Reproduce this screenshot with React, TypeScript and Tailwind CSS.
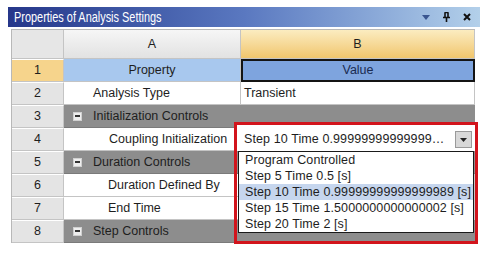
import React from 'react';

const rows = [
  { n: '2', label: 'Analysis Type', value: 'Transient', indent: 'pl-[29px]' },
  { n: '3', section: 'Initialization Controls' },
  { n: '4', label: 'Coupling Initialization', value: '', indent: 'pl-[45px]' },
  { n: '5', section: 'Duration Controls' },
  { n: '6', label: 'Duration Defined By', value: '', indent: 'pl-[44px]' },
  { n: '7', label: 'End Time', value: '', indent: 'pl-[44px]' },
  { n: '8', section: 'Step Controls' },
];

const options = [
  'Program Controlled',
  'Step 5 Time 0.5 [s]',
  'Step 10 Time 0.99999999999999989 [s]',
  'Step 15 Time 1.5000000000000002 [s]',
  'Step 20 Time 2 [s]',
];

const NumCell = ({ children, yellow }: { children: React.ReactNode; yellow?: boolean }) => (
  <div
    className={`flex items-center justify-center border-r border-b border-[#c4c4c4] border-t border-t-white ${
      yellow ? 'bg-[#f6d48c]' : 'bg-[#e4e4e4]'
    }`}
  >
    {children}
  </div>
);

const MinusBox = () => (
  <div className="w-[9px] h-[9px] bg-[#eeeeee] border border-[#d0d0d0] flex items-center justify-center">
    <div className="w-[5px] h-[1.5px] bg-[#333]" />
  </div>
);

export default function App() {
  return (
    <div className="w-[494px] h-[253px] bg-white pt-[7px] pl-[8px] text-[#1e1e1e] font-['Liberation_Sans',Arial,sans-serif] overflow-hidden">
      {/* title bar */}
      <div className="w-[472px] h-[20px] flex items-center pl-[6px] pr-[9px] bg-gradient-to-r from-[#26378a] via-[#5a78c0] to-[#b3d0ea]">
        <span className="inline-block w-[200px] whitespace-nowrap origin-left scale-x-[0.78] text-white text-[14px]">
          Properties of Analysis Settings
        </span>
        <div className="ml-auto flex items-center gap-[13px]">
          <svg width="8" height="5" viewBox="0 0 8 5">
            <path d="M0 0 L8 0 L4 5 Z" fill="#3a5590" />
          </svg>
          <svg width="7" height="10" viewBox="0 0 7 10">
            <path d="M1.5 0.5 H5.5 M2 0.5 V5.5 M5 0.5 V5.5 M0 5.5 H7 M3.5 5.5 V10" stroke="#111" strokeWidth="1.6" fill="none" />
          </svg>
          <svg width="8" height="8" viewBox="0 0 8 8">
            <path d="M1 1 L7 7 M7 1 L1 7" stroke="#111" strokeWidth="2" />
          </svg>
        </div>
      </div>

      {/* grid */}
      <div className="relative ml-[3px] mt-[2px] w-[464px] border-l border-t border-[#b8b8b8] text-[12.5px]">
        <div className="grid grid-cols-[52px_177px_234px] grid-rows-[29px_repeat(8,23px)]">
          <div className="bg-[#e6e6e6] border-r border-b border-[#c4c4c4]" />
          <div className="flex items-center justify-center bg-gradient-to-b from-[#f6f6f6] to-[#e2e2e2] border-r border-b border-[#c4c4c4]">
            A
          </div>
          <div className="flex items-center justify-center bg-gradient-to-b from-[#fbecc0] to-[#f1c66c] border-r border-b border-[#c4c4c4]">
            B
          </div>

          <NumCell yellow>1</NumCell>
          <div className="flex items-center justify-center bg-[#a8c8ee] border-r border-b border-[#c4c4c4]">Property</div>
          <div className="flex items-center justify-center bg-[#7ea4de] border-2 border-[#141414] text-[#1a2a50]">Value</div>

          {rows.map((r) =>
            r.section ? (
              <React.Fragment key={r.n}>
                <NumCell>{r.n}</NumCell>
                <div className="col-span-2 flex items-center gap-[11px] pl-[9px] bg-[#8d8d8d] border-b border-[#7a7a7a]">
                  <MinusBox />
                  <span>{r.section}</span>
                </div>
              </React.Fragment>
            ) : (
              <React.Fragment key={r.n}>
                <NumCell>{r.n}</NumCell>
                <div className={`flex items-center bg-white border-r border-b border-[#c4c4c4] ${r.indent}`}>{r.label}</div>
                <div className="flex items-center pl-[3px] bg-white border-r border-b border-[#c4c4c4]">{r.value}</div>
              </React.Fragment>
            )
          )}
        </div>

        {/* highlighted combo + open list */}
        <div className="absolute left-[222px] top-[92px] w-[244px] h-[122px] border-[3px] border-[#d2141c] flex flex-col">
          <div className="h-[26px] bg-white flex items-center pl-[7px] pr-[3px] pt-[3px]">
            <span className="whitespace-nowrap tracking-[0.1px]">Step 10 Time 0.99999999999999…</span>
            <div className="ml-auto w-[17px] h-[17px] bg-[#d8d8d8] border border-[#9a9a9a] flex items-center justify-center">
              <svg width="7" height="4" viewBox="0 0 7 4">
                <path d="M0 0 L7 0 L3.5 4 Z" fill="#222" />
              </svg>
            </div>
          </div>
          <div className="ml-[1px] mr-[1px] bg-white border border-[#1a1a1a] flex flex-col">
            {options.map((o, i) => (
              <div
                key={o}
                className={`h-[16px] flex items-center pl-[6px] whitespace-nowrap tracking-[0.1px] ${i === 2 ? 'bg-[#c6d6ee]' : ''}`}
              >
                {o}
              </div>
            ))}
          </div>
        </div>
      </div>
    </div>
  );
}
